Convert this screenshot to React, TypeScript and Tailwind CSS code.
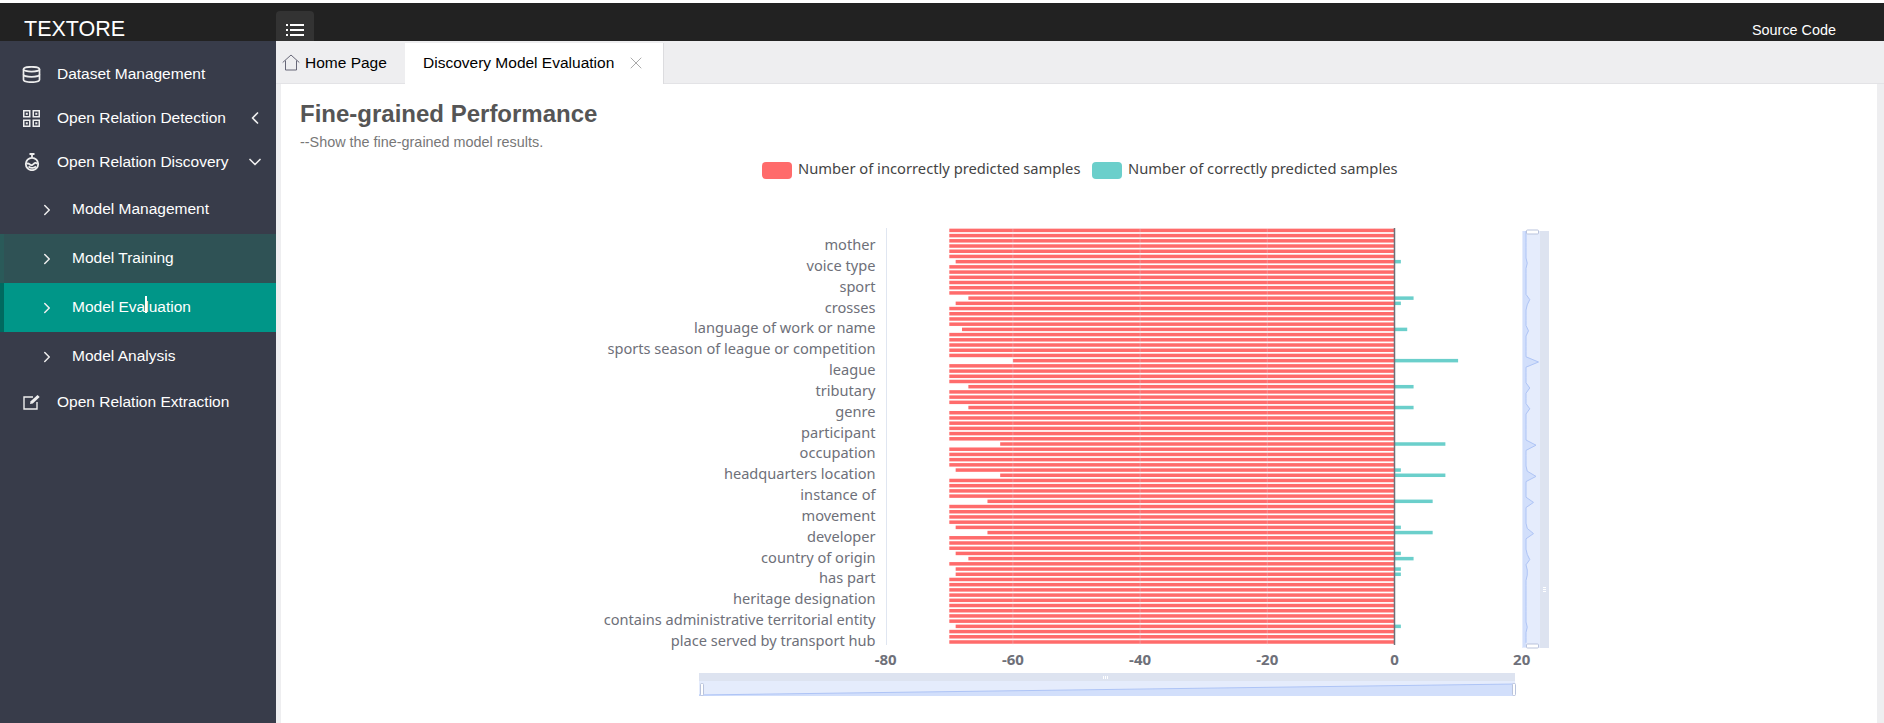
import { ChevronDown, ChevronLeft, ChevronRight, X } from "lucide-react";

// number of correctly predicted samples, by bar index from the top (others are 0)
const correct: Record<number, number> = {
  6: 1, 13: 3, 14: 1, 19: 2, 25: 10, 30: 3, 34: 3, 41: 8, 46: 1, 47: 8,
  52: 6, 57: 1, 58: 6, 62: 1, 63: 3, 65: 1, 66: 1, 76: 1,
};

const labels = [
  "mother",
  "voice type",
  "sport",
  "crosses",
  "language of work or name",
  "sports season of league or competition",
  "league",
  "tributary",
  "genre",
  "participant",
  "occupation",
  "headquarters location",
  "instance of",
  "movement",
  "developer",
  "country of origin",
  "has part",
  "heritage designation",
  "contains administrative territorial entity",
  "place served by transport hub",
];

const BAR_COUNT = 80;
const unit = 6.36;
const zeroX = 1394.5 - 281;
const chartTop = 150;
const barY = (i: number) => 230.4 + 5.21 * i - chartTop;
const toX = (v: number) => zeroX + v * unit;

function PerformanceChart() {
  const bars = Array.from({ length: BAR_COUNT }, (_, i) => i);

  let shadow = "M1245 81";
  bars.forEach((i) => {
    shadow += ` L${1245 + (correct[i] ?? 0) * 1.25} ${82 + 5.2 * i}`;
  });
  const shadowLine = shadow;
  shadow += " L1245 497 L1242 497 L1242 81 Z";

  return (
    <svg width={1596} height={573} className="block" style={{ fontFamily: '"Noto Sans", sans-serif' }}>
      {/* legend */}
      <rect x={481} y={12} width={30} height={17} rx={4} fill="#ff6b6b" />
      <text x={517} y={24} fontSize={14.72} fill="#444">Number of incorrectly predicted samples</text>
      <rect x={811} y={12} width={30} height={17} rx={4} fill="#6bcfcb" />
      <text x={847} y={24} fontSize={14.72} fill="#444">Number of correctly predicted samples</text>

      {/* axes */}
      <line x1={605.5} x2={605.5} y1={78} y2={495} stroke="#e0e6f1" />
      {bars.map((i) => {
        const n = correct[i] ?? 0;
        return (
          <g key={i}>
            <rect x={toX(-70 + n)} y={barY(i) - 1.75} width={(70 - n) * unit} height={3.5} fill="#ff6b6b" />
            {n > 0 && <rect x={zeroX} y={barY(i) - 1.75} width={n * unit} height={3.5} fill="#6bcfcb" />}
          </g>
        );
      })}
      {[-60, -40, -20].map((v) => (
        <line key={v} x1={toX(v)} x2={toX(v)} y1={78} y2={495} stroke="#e0e6f1" strokeOpacity={0.3} />
      ))}
      <line x1={zeroX} x2={zeroX} y1={78} y2={495} stroke="#6e7079" strokeWidth={1.5} />

      {labels.map((label, i) => (
        <text key={label} x={594.5} y={100 + 20.84 * i} textAnchor="end" fontSize={14.6} fill="#6e7079">
          {label}
        </text>
      ))}
      {[-80, -60, -40, -20, 0, 20].map((v) => (
        <text key={v} x={toX(v)} y={515} textAnchor="middle" fontSize={15} fontWeight={700} fill="#6e7079">
          {v}
        </text>
      ))}

      {/* vertical data zoom */}
      <rect x={1241} y={81} width={18} height={417} fill="#e5ecfc" />
      <rect x={1259} y={81} width={9} height={417} fill="#dde3f0" />
      <path d={shadow} fill="#d2dffb" />
      <path d={shadowLine} fill="none" stroke="#aec4f6" />
      <rect x={1245.5} y={80} width={12} height={4} rx={1} fill="#fff" stroke="#b9c3dc" />
      <rect x={1245.5} y={494} width={12} height={4} rx={1} fill="#fff" stroke="#b9c3dc" />
      <rect x={1262} y={437} width={3} height={1} fill="#fff" />
      <rect x={1262} y={439} width={3} height={1} fill="#fff" />
      <rect x={1262} y={441} width={3} height={1} fill="#fff" />

      {/* horizontal data zoom */}
      <rect x={418} y={523} width={816} height={8} fill="#dde3f0" />
      <rect x={418} y={531} width={816} height={15} fill="#e5ecfc" />
      <path d="M418 545 L1234 534 L1234 546 L418 546 Z" fill="#d2dffb" />
      <path d="M418 545 L1234 534" fill="none" stroke="#aec4f6" />
      <rect x={419.5} y={533.5} width={3} height={12} rx={1} fill="#fff" stroke="#b9c3dc" />
      <rect x={1231.5} y={533.5} width={3} height={12} rx={1} fill="#fff" stroke="#b9c3dc" />
      <rect x={822} y={526} width={1} height={3} fill="#fff" />
      <rect x={824} y={526} width={1} height={3} fill="#fff" />
      <rect x={826} y={526} width={1} height={3} fill="#fff" />
    </svg>
  );
}

function DatabaseIcon() {
  return (
    <svg width={19} height={17} viewBox="0 0 19 17" fill="none" stroke="currentColor" strokeWidth={1.7}>
      <ellipse cx={9.5} cy={3.2} rx={8} ry={2.4} />
      <path d="M1.5 3.2v10.6c0 1.3 3.6 2.4 8 2.4s8-1.1 8-2.4V3.2" />
      <path d="M1.5 8.5c0 1.3 3.6 2.4 8 2.4s8-1.1 8-2.4" />
    </svg>
  );
}

function QrIcon() {
  return (
    <svg width={19} height={19} viewBox="0 0 19 19" fill="currentColor">
      <path fillRule="evenodd" d="M1 1h7.5v7.5H1zM2.5 2.5v4.500h4.500v-4.500z" />
      <path fillRule="evenodd" d="M10.500 1H18v7.500h-7.500zM12 2.500v4.500h4.500v-4.500z" />
      <path fillRule="evenodd" d="M1 10.500h7.500V18H1zM2.500 12v4.500h4.500V12z" />
      <path fillRule="evenodd" d="M10.500 10.500H18V18h-7.500zM12 12v4.500h4.500V12z" />
      <rect x={3.800} y={3.800} width={2} height={2} />
      <rect x={13.300} y={3.800} width={2} height={2} />
      <rect x={3.800} y={13.300} width={2} height={2} />
      <rect x={13.300} y={13.300} width={2} height={2} />
    </svg>
  );
}

function FlaskIcon() {
  return (
    <svg width={16} height={18} viewBox="0 0 16 18" fill="none" stroke="currentColor" strokeWidth={1.8}>
      <path d="M5.500 1h5M8 1v3.500" />
      <circle cx={8} cy={11} r={6.200} />
      <path d="M2.500 11c2.500-2.500 3.500 2.800 6 .8s3-2.500 5-1" />
      <path d="M4.500 13.500c2 1.500 5 1.800 7.500 0" />
    </svg>
  );
}

function EditIcon() {
  return (
    <svg width={18} height={16} viewBox="0 0 18 16" fill="none" stroke="currentColor" strokeWidth={1.4}>
      <path d="M10 3H1v12h13V8" />
      <path d="M7 10l.6-2.800L14.500.9l2.200 2.200-6.900 6.300z" fill="currentColor" stroke="none" />
    </svg>
  );
}

function HomeIcon() {
  return (
    <svg width={18} height={17} viewBox="0 0 18 17" fill="none" stroke="#667" strokeWidth={1}>
      <path d="M.7 8.500 9 1l8.300 7.500" />
      <path d="M3.500 6.500v9.500h11V6.500" />
    </svg>
  );
}

function ListIcon() {
  return (
    <svg width={18} height={12} viewBox="0 0 18 12" fill="none" stroke="#fff" strokeWidth={2}>
      <path d="M0 1h2M4 1h14M0 6h2M4 6h14M0 11h2M4 11h14" />
    </svg>
  );
}

function SubItem({ label, active, hover }: { label: string; active?: boolean; hover?: boolean }) {
  return (
    <div
      className={
        "flex h-[49px] items-center text-white " +
        (active
          ? "bg-[#009688] border-l-4 border-[#00695f] pl-[34px]"
          : hover
            ? "bg-[#2f5255] border-l-4 border-[#2a5a59] pl-[34px]"
            : "pl-[38px]")
      }
    >
      <ChevronRight size={18} strokeWidth={2} className="text-[#eee]" />
      <span className="relative ml-[16px] -translate-y-px">
        {label}
        {active && <span className="absolute left-[73px] top-[1px] h-[17px] w-[2px] bg-white" />}
      </span>
    </div>
  );
}

function MenuItem({ icon, label, chevron }: { icon: React.ReactNode; label: string; chevron?: React.ReactNode }) {
  return (
    <div className="flex h-[44px] items-center pl-[22px] pr-[11px] text-white">
      <span className="flex w-[19px] justify-center text-[#eee]">{icon}</span>
      <span className="ml-[16px] flex-1">{label}</span>
      {chevron}
    </div>
  );
}

export default function App() {
  return (
    <div className="h-[723px] overflow-hidden bg-white pt-[3px] font-['Liberation_Sans',Arial,sans-serif]">
      <header className="flex h-[38px] items-end bg-[#222222]">
        <div className="flex h-[38px] w-[276px] items-center pl-[24px] pt-[15px] text-[21.5px] text-white">TEXTORE</div>
        <button className="flex h-[30px] w-[38px] items-center justify-center rounded-t-[4px] bg-[#333333] pt-[7px]">
          <ListIcon />
        </button>
        <div className="ml-auto pb-[1px] pr-[48px] text-[14.4px] leading-[20px] text-white">Source Code</div>
      </header>

      <div className="flex h-[682px]">
        <aside className="w-[276px] shrink-0 bg-[#383c4a] pt-[11px] text-[15.5px]">
          <MenuItem icon={<DatabaseIcon />} label="Dataset Management" />
          <MenuItem
            icon={<QrIcon />}
            label="Open Relation Detection"
            chevron={<ChevronLeft size={20} strokeWidth={2} className="text-[#eee]" />}
          />
          <MenuItem
            icon={<FlaskIcon />}
            label="Open Relation Discovery"
            chevron={<ChevronDown size={20} strokeWidth={2} className="text-[#eee]" />}
          />
          <div className="-mb-px mt-[1px]">
            <SubItem label="Model Management" />
            <SubItem label="Model Training" hover />
            <SubItem label="Model Evaluation" active />
            <SubItem label="Model Analysis" />
          </div>
          <MenuItem icon={<EditIcon />} label="Open Relation Extraction" />
        </aside>

        <main className="flex min-w-0 flex-1 flex-col bg-[#eeeef0]">
          <div className="flex h-[43px] shrink-0 border-b border-[#e3e3e6] text-[15.5px]">
            <div className="flex w-[129px] items-center pl-[6px] pt-[1px] text-black">
              <HomeIcon />
              <span className="ml-[5px]">Home Page</span>
            </div>
            <div className="-mb-px mt-[2px] flex w-[259px] items-center border-r border-[#dcdcdf] bg-white pb-[2px] pl-[18px] text-black">
              <span>Discovery Model Evaluation</span>
              <X size={20} strokeWidth={1} className="ml-[12px] text-[#999]" />
            </div>
          </div>
          <div className="ml-[5px] mr-[7px] flex-1 bg-white">
            <div className="pl-[19px] pt-[15px]">
              <h1 className="text-[24px] font-bold leading-[30px] text-[#555]">Fine-grained Performance</h1>
              <p className="mt-[6px] text-[14.4px] leading-[15px] text-[#777]">--Show the fine-grained model results.</p>
            </div>
            <PerformanceChart />
          </div>
        </main>
      </div>
    </div>
  );
}
